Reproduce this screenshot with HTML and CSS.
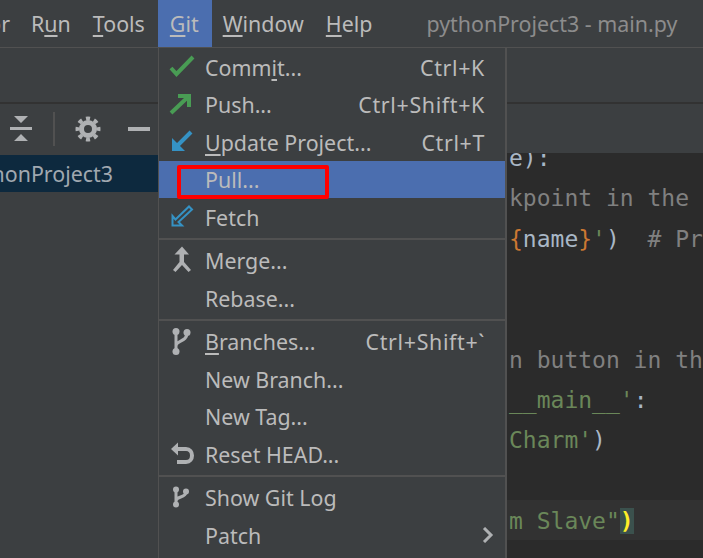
FILE: index.html
```html
<!DOCTYPE html>
<html lang="en">
<head>
<meta charset="utf-8">
<title>pythonProject3 - main.py</title>
<link rel="stylesheet" href="styles.css">
</head>
<body>
<div class="app">
  <header class="menubar">
    <span class="menu-item clipped"><span>or</span></span>
    <span class="menu-item">R<u>u</u>n</span>
    <span class="menu-item"><u>T</u>ools</span>
    <span class="menu-item active"><u>G</u>it</span>
    <span class="menu-item"><u>W</u>indow</span>
    <span class="menu-item"><u>H</u>elp</span>
    <span class="title">pythonProject3 - main.py</span>
  </header>
  <div class="navbar"></div>
  <div class="toolbar">
    <div class="tools">
      <svg class="tool" width="22" height="26" viewBox="0 0 22 26"><path class="fill" d="M4 0h14l-7 7zM4 25h14l-7-7z"/><rect class="fill" x="0" y="11" width="22" height="3"/></svg>
      <span class="tool-sep"></span>
      <svg class="tool" width="26" height="26" viewBox="0 0 26 26"><circle class="gear" cx="13" cy="13" r="6.5"/><circle class="teeth" cx="13" cy="13" r="10.5" pathLength="32" stroke-dasharray="2 2" stroke-dashoffset="1"/></svg>
      <svg class="tool minus" width="22" height="4" viewBox="0 0 22 4"><rect class="fill" width="22" height="4"/></svg>
    </div>
  </div>
  <div class="workspace">
    <aside class="project">
      <div class="project-row"><span>pythonProject3</span></div>
    </aside>
    <main class="editor">
      <div class="code">
        <div class="line">e):</div>
        <div class="line gray">kpoint in the</div>
        <div class="line"><span class="orange">{</span>name<span class="orange">}</span><span class="green">'</span>)  <span class="gray"># Pr</span></div>
        <div class="line"></div>
        <div class="line"></div>
        <div class="line gray">n button in th</div>
        <div class="line"><span class="green">__main__'</span>:</div>
        <div class="line"><span class="green">Charm'</span>)</div>
        <div class="line"></div>
        <div class="line current"><span class="green">m Slave"</span><span class="match">)</span></div>
      </div>
    </main>
  </div>

  <nav class="git-menu">
    <div class="item"><svg class="icon" viewBox="0 0 47 37"><path class="stroke green-s" d="M13 19l5.500 6L35 8"/></svg><span class="label">Comm<u>i</u>t...</span><span class="key">Ctrl+K</span></div>
    <div class="item"><svg class="icon" viewBox="0 0 47 37"><path class="stroke green-s" d="M13 27L30 11M20 10h11v11"/></svg><span class="label">Push...</span><span class="key">Ctrl+Shift+K</span></div>
    <div class="item"><svg class="icon" viewBox="0 0 47 37"><path class="stroke blue-s" d="M33 8L19 22"/><path class="blue-f" d="M14 14l13 13H14z"/></svg><span class="label"><u>U</u>pdate Project...</span><span class="key">Ctrl+T</span></div>
    <div class="item selected"><span class="icon-slot"></span><span class="label">Pull...</span></div>
    <div class="item"><svg class="icon" viewBox="0 0 47 37"><path class="thin" d="M14.500 17v9.500H24l-3.500-3.500L34 10.500l-3-3L17.500 20.500z"/></svg><span class="label">Fetch</span></div>
    <div class="sep"></div>
    <div class="item"><svg class="icon" viewBox="0 0 47 37"><path class="fill" d="M24 4.500l7 8h-5V20l7 8-2.500 2-6.500-7-6.500 7L15 28l6.500-8v-7.500h-5z"/></svg><span class="label">Merge...</span></div>
    <div class="item"><span class="icon-slot"></span><span class="label">Rebase...</span></div>
    <div class="sep"></div>
    <div class="item"><svg class="icon" viewBox="0 0 47 37"><path class="gray-s" d="M18 9v19M18 23c0-6 11-4 11-13"/><circle class="fill" cx="18" cy="8.500" r="3.500"/><circle class="fill" cx="18" cy="28.500" r="3.500"/><circle class="fill" cx="29" cy="9.500" r="3.500"/></svg><span class="label"><u>B</u>ranches...</span><span class="key">Ctrl+Shift+`</span></div>
    <div class="item"><span class="icon-slot"></span><span class="label">New Branch...</span></div>
    <div class="item"><span class="icon-slot"></span><span class="label">New Tag...</span></div>
    <div class="item"><svg class="icon" viewBox="0 0 47 37"><path class="fill" d="M13 13l7-6.500v13z"/><path class="gray-s wide" d="M19 13h9c4 0 6 3 6 6.500S32 26 28 26h-9"/></svg><span class="label">Reset HEAD...</span></div>
    <div class="sep"></div>
    <div class="item"><svg class="icon" viewBox="0 0 47 37"><path class="gray-s" d="M18 11v14M18 22c0-5 10-3 10-9"/><circle class="fill" cx="18" cy="10.500" r="3"/><circle class="fill" cx="18" cy="25.500" r="3"/><circle class="fill" cx="28" cy="12.500" r="3"/></svg><span class="label">Show Git Log</span></div>
    <div class="item"><span class="icon-slot"></span><span class="label">Patch</span><svg class="chevron" width="12" height="16" viewBox="0 0 12 16"><path class="gray-s" d="M2 1l7 7-7 7"/></svg></div>
  </nav>
  <div class="callout"></div>
</div>
</body>
</html>
```
FILE: styles.css
```css
* { box-sizing: border-box; }
html, body { margin: 0; height: 100%; }
body { background: #3c3f41; overflow: hidden; }
u { text-underline-offset: 3px; }

.app {
  position: relative;
  width: 703px;
  height: 558px;
  display: flex;
  flex-direction: column;
  overflow: hidden;
  font-family: "Noto Sans", "Open Sans", sans-serif;
  font-size: 21.4px;
  color: #bbbbbb;
}

.menubar {
  height: 48px;
  flex: none;
  display: flex;
  align-items: stretch;
  border-bottom: 1px solid #515151;
  white-space: nowrap;
}
.menu-item { padding: 0 11px; line-height: 47px; }
.menu-item.clipped {
  width: 20px;
  padding: 0 10px 0 0;
  display: flex;
  justify-content: flex-end;
  overflow: hidden;
}
.menu-item.active { background: #4b6eaf; margin-left: 2px; padding: 0 13px 0 12px; }
.title { margin-left: 43px; color: #8c8c8c; line-height: 47px; }

.navbar {
  height: 56px;
  flex: none;
  border-bottom: 2px solid #323232;
}
.toolbar { height: 49px; flex: none; display: flex; align-items: center; }
.tools { display: flex; align-items: center; padding-left: 10px; height: 36px; }
.tool { display: block; flex: none; }
.tool-sep { width: 2px; height: 34px; margin: 0 20px 0 21px; background: #515151; }
.minus { margin-left: 27px; }

.fill { fill: #afb1b3; }
.gear { fill: none; stroke: #afb1b3; stroke-width: 5; }
.teeth { fill: none; stroke: #afb1b3; stroke-width: 4; }

.workspace { flex: 1; display: flex; min-height: 0; }
.project { width: 158px; flex: none; padding-top: 2px; }
.project-row {
  height: 37px;
  width: 158px;
  background: #0d293e;
  display: flex;
  justify-content: flex-end;
  padding-right: 45px;
  overflow: hidden;
  align-items: center;
  white-space: nowrap;
  color: #a0a8b0;
}

.editor {
  flex: 1;
  margin-left: 349px;
  background: #2b2b2b;
  overflow: hidden;
  font-family: "DejaVu Sans Mono", monospace;
  font-size: 23px;
  color: #a9b7c6;
}
.code { margin-top: -16px; }
.line { height: 40.33px; line-height: 42px; padding-left: 2px; white-space: pre; }
.line.current { background: #323232; }
.gray { color: #808080; }
.green { color: #6a8759; }
.orange { color: #cc7832; }
.match { background: #3b514d; color: #ffef28; font-weight: bold; }

.git-menu {
  position: absolute;
  left: 158px;
  top: 48px;
  width: 349px;
  height: 510px;
  background: #3c3f41;
  border-left: 1px solid #515151;
  border-right: 2px solid #515151;
}
.item {
  height: 37.5px;
  display: flex;
  align-items: center;
  padding: 1px 20px 0 0;
  position: relative;
}
.item.selected { background: #4b6eaf; }
.icon { width: 47px; height: 37px; flex: none; margin-left: -1px; }
.icon-slot { width: 46px; flex: none; }
.label { flex: 1; white-space: nowrap; }
.key { white-space: nowrap; letter-spacing: 0.65px; }
.chevron { margin-right: -9px; }
.sep { height: 6px; display: flex; align-items: center; }
.sep::after { content: ""; flex: 1; height: 2px; background: #515151; }

.stroke { fill: none; stroke-width: 4; }
.green-s { stroke: #499c54; }
.blue-s { stroke: #3592c4; }
.blue-f { fill: #3592c4; }
.thin { fill: none; stroke: #3592c4; stroke-width: 2; }
.gray-s { fill: none; stroke: #afb1b3; stroke-width: 3; }
.gray-s.wide { stroke-width: 4; }

.callout {
  position: absolute;
  left: 177px;
  top: 165px;
  width: 152px;
  height: 34px;
  border: 4px solid #ff0000;
  border-radius: 2px;
}
```
